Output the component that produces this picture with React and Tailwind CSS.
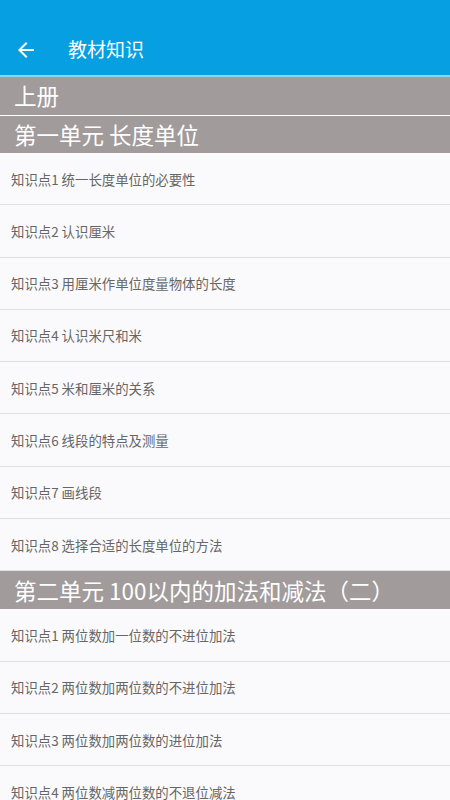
const sections = [
  {
    title: "第一单元 长度单位",
    h: "h-[37px]",
    items: [
      "知识点1 统一长度单位的必要性",
      "知识点2 认识厘米",
      "知识点3 用厘米作单位度量物体的长度",
      "知识点4 认识米尺和米",
      "知识点5 米和厘米的关系",
      "知识点6 线段的特点及测量",
      "知识点7 画线段",
      "知识点8 选择合适的长度单位的方法",
    ],
  },
  {
    title: "第二单元 100以内的加法和减法（二）",
    h: "h-[38px]",
    items: [
      "知识点1 两位数加一位数的不进位加法",
      "知识点2 两位数加两位数的不进位加法",
      "知识点3 两位数加两位数的进位加法",
      "知识点4 两位数减两位数的不退位减法",
    ],
  },
];

const font = { fontFamily: '"Noto Sans CJK SC", "Noto Sans", sans-serif' };

export default function App() {
  return (
    <div className="w-[450px] h-[800px] overflow-hidden bg-[#fafafc]" style={font}>
      <div className="h-[75px] bg-[#06a0e2] flex items-end">
        <div className="h-[51px] flex items-center w-full">
          <svg width="24" height="24" viewBox="0 0 24 24" className="ml-[14px]">
            <path d="M20 11H7.83l5.59-5.59L12 4l-8 8 8 8 1.41-1.41L7.83 13H20v-2z" fill="#fff" />
          </svg>
          <span className="ml-[30px] text-[19px] text-white">教材知识</span>
        </div>
      </div>
      <div className="h-[2px] bg-[#8fd3f0]" />
      <div className="h-[39px] bg-[#a19b9b] text-white text-[22.5px] pl-[14px] flex items-center border-b border-white">
        上册
      </div>
      {sections.map((s) => (
        <div key={s.title}>
          <div className={`${s.h} bg-[#a19b9b] text-white text-[22.5px] pl-[14px] flex items-center`}>
            {s.title}
          </div>
          {s.items.map((it) => (
            <div
              key={it}
              className="h-[52.3px] border-b border-[#e0dfe1] flex items-center pl-[11px] text-[13.4px] text-[#666]"
            >
              {it}
            </div>
          ))}
        </div>
      ))}
    </div>
  );
}
